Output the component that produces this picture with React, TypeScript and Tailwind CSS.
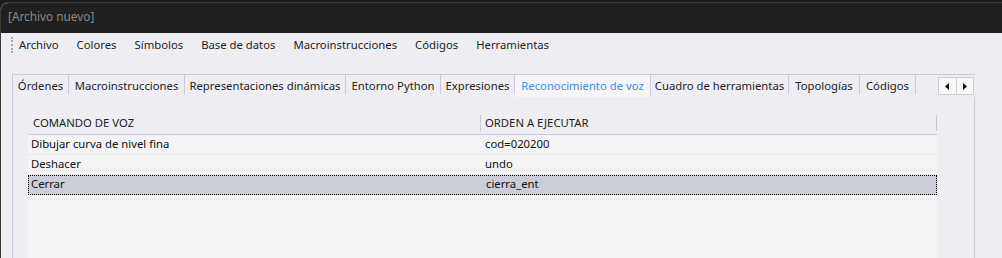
import React from 'react';

const menus = ['Archivo', 'Colores', 'Símbolos', 'Base de datos', 'Macroinstrucciones', 'Códigos', 'Herramientas'];

const tabs = [
  { label: 'Órdenes', w: 'w-[56px]' },
  { label: 'Macroinstrucciones', w: 'w-[116px]' },
  { label: 'Representaciones dinámicas', w: 'w-[161px]' },
  { label: 'Entorno Python', w: 'w-[95px]' },
  { label: 'Expresiones', w: 'w-[74px]' },
  { label: 'Reconocimiento de voz', w: 'w-[136px]', active: true },
  { label: 'Cuadro de herramientas', w: 'w-[138px]' },
  { label: 'Topologías', w: 'w-[71px]' },
  { label: 'Códigos', w: 'w-[56px]' },
];

const rows = [
  { cmd: 'Dibujar curva de nivel fina', order: 'cod=020200' },
  { cmd: 'Deshacer', order: 'undo' },
  { cmd: 'Cerrar', order: 'cierra_ent', selected: true },
];

export default function App() {
  return (
    <div className="w-[1002px] h-[258px] overflow-hidden bg-[#1b1b1b] pt-[2px] font-['Noto_Sans',sans-serif] text-[11.3px] whitespace-nowrap">
      <div className="h-full flex flex-col border-t border-l border-[#3a3a3a] rounded-tl-[8px] overflow-hidden bg-[#eeeef2]">
        {/* title bar */}
        <div className="h-[30px] shrink-0 bg-[#202020] flex items-center pl-[7px] pb-[2px] text-[11.8px] text-[#8a8a8a]">
          [Archivo nuevo]
        </div>

        {/* menu bar */}
        <div className="h-[24px] shrink-0 flex items-center pl-[10px] text-[#1e1e1e]">
          <div className="w-[3px] h-[16px] border-l-2 border-dotted border-[#a8a8a8] mr-[5px]" />
          <div className="flex gap-[18px]">
            {menus.map((m) => (
              <span key={m}>{m}</span>
            ))}
          </div>
        </div>

        {/* tab control */}
        <div className="flex-1 flex flex-col pl-[11px] pr-[27px] pt-[17px]">
          <div className="h-[23px] shrink-0 flex border-t border-[#cdcadb] relative">
            <div className="w-[1px] bg-[#cdcadb]" />
            {tabs.map((t) => (
              <div
                key={t.label}
                className={`${t.w} shrink-0 flex items-center justify-center border-r border-[#cdcadb] ${t.active ? 'bg-[#f5f5f7] text-[#3b8eea]' : 'text-[#1e1e1e] mb-[3px] pt-[3px]'}`}
              >
                {t.label}
              </div>
            ))}
            <div className="flex-1" />
            <div className="absolute right-[1px] top-[2px] h-[18px] w-[36px] flex border border-[#cfcfcf] bg-[#f7f7f7]">
              <div className="flex-1 flex items-center justify-center border-r border-[#cfcfcf]">
                <svg width="4" height="7" viewBox="0 0 4 7"><path d="M4 0L0 3.5L4 7Z" fill="#111" /></svg>
              </div>
              <div className="flex-1 flex items-center justify-center">
                <svg width="4" height="7" viewBox="0 0 4 7"><path d="M0 0L4 3.5L0 7Z" fill="#111" /></svg>
              </div>
            </div>
          </div>

          <div className="flex-1 border-l border-r border-[#cdcadb] pl-[15px] pr-[37px] pt-[15px] flex flex-col">
            {/* grid header */}
            <div className="h-[23px] shrink-0 flex border-b border-[#cdcadb] text-[#1e1e1e]">
              <div className="w-[453px] flex items-center pl-[5px] border-r border-[#c9c9d4] my-[3px]">COMANDO DE VOZ</div>
              <div className="flex-1 flex items-center pl-[4px] border-r border-[#c9c9d4] my-[3px]">ORDEN A EJECUTAR</div>
            </div>
            {/* grid body */}
            <div className="flex-1 bg-[#f4f4f4] text-[#111]">
              {rows.map((r) => (
                <div
                  key={r.cmd}
                  className={`h-[20px] flex items-center pb-[1px] ${r.selected ? 'bg-[#cbcdd9] border border-dotted border-black' : 'border-b border-[#e8e8e8]'}`}
                >
                  <div className={`w-[453px] ${r.selected ? 'pl-[2px]' : 'pl-[3px]'}`}>{r.cmd}</div>
                  <div className="flex-1 pl-[4px]">{r.order}</div>
                </div>
              ))}
            </div>
          </div>
        </div>
      </div>
    </div>
  );
}
